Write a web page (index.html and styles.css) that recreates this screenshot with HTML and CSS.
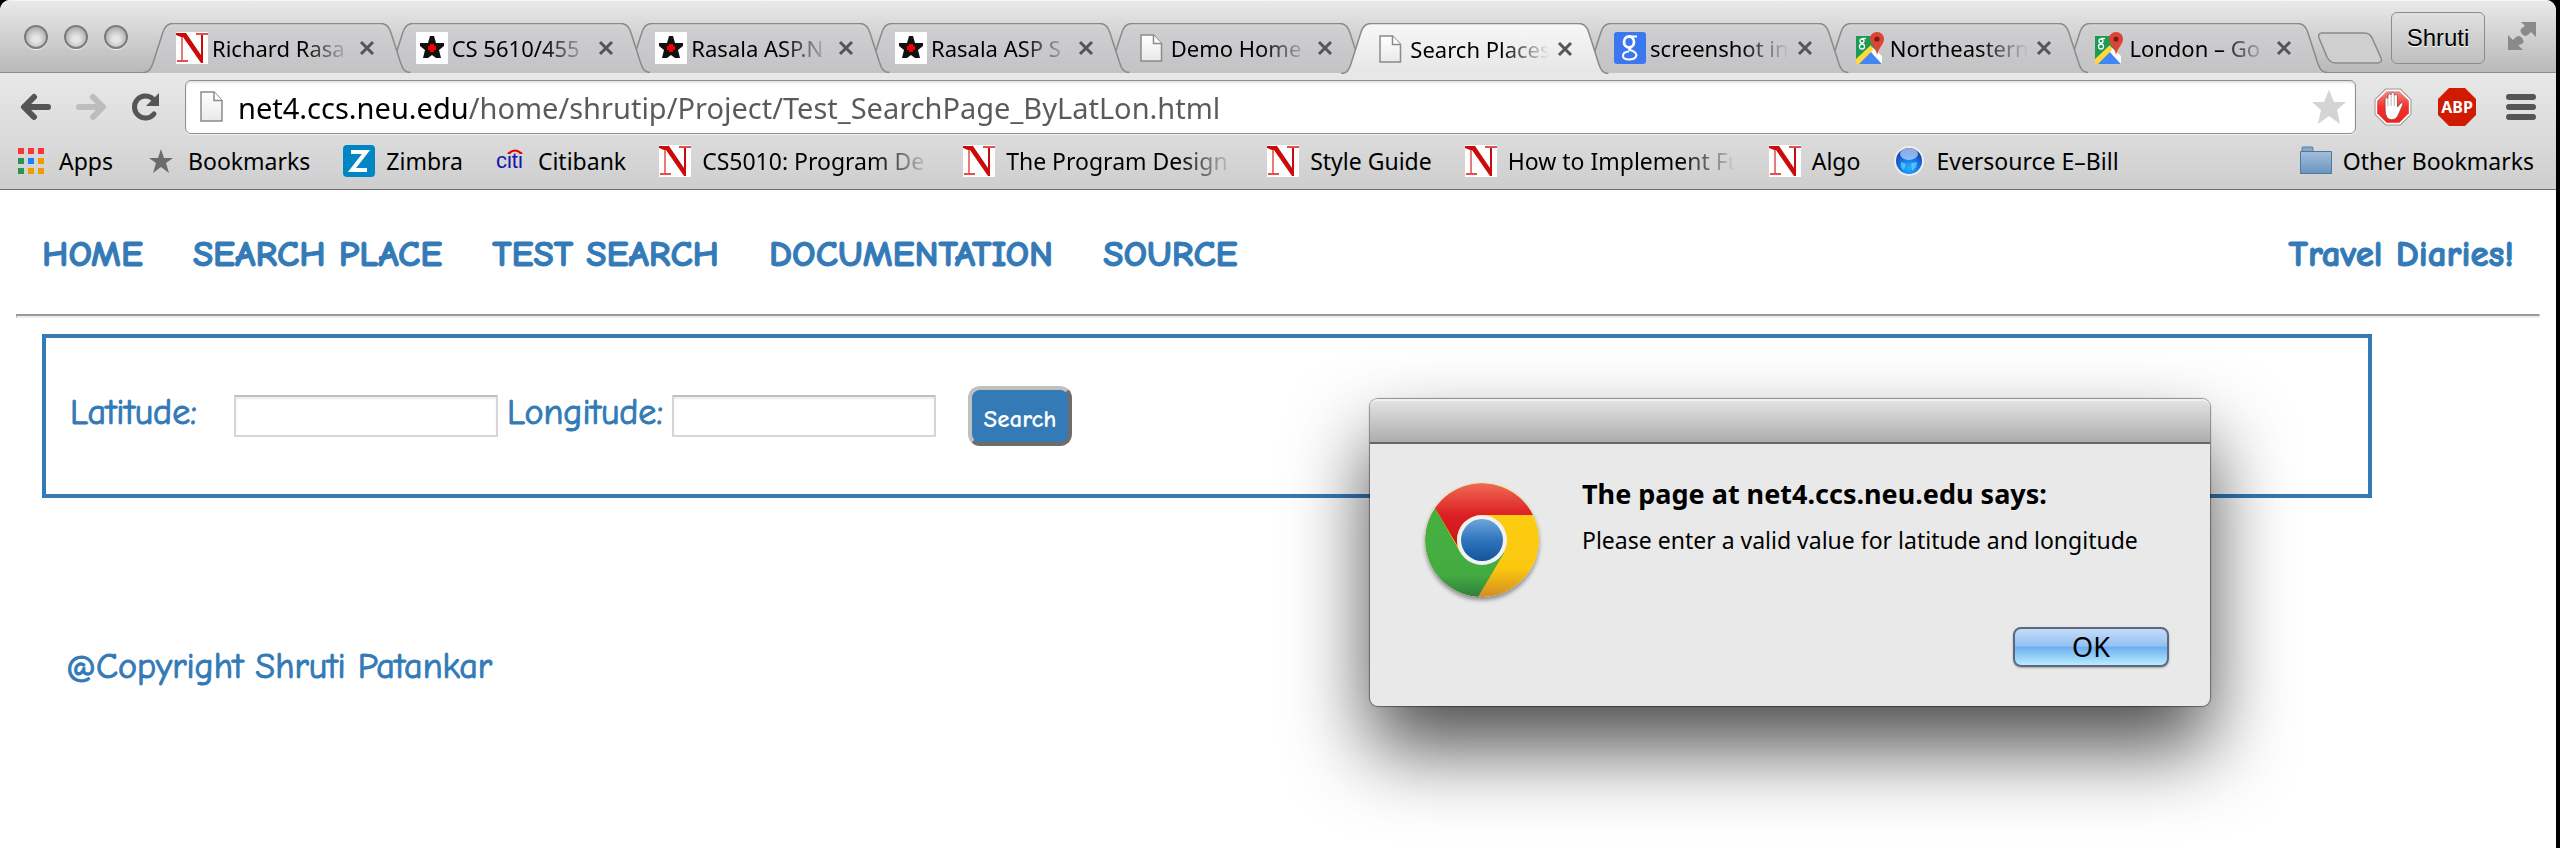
FILE: index.html
```html
<!DOCTYPE html>
<html lang="en">
<head>
<meta charset="utf-8">
<title>Search Places</title>
<link rel="stylesheet" href="styles.css">
</head>
<body>
<svg class="defs" aria-hidden="true">
  <defs>
    <linearGradient id="gTab" x1="0" y1="0" x2="0" y2="1"><stop offset="0" stop-color="#d8d8da"/><stop offset=".1" stop-color="#cfcfd1"/><stop offset="1" stop-color="#c3c3c5"/></linearGradient>
    <linearGradient id="gActive" x1="0" y1="0" x2="0" y2="1"><stop offset="0" stop-color="#f7f7f7"/><stop offset="1" stop-color="#e6e6e6"/></linearGradient>
    <linearGradient id="gPage" x1="0" y1="0" x2="0" y2="1"><stop offset="0" stop-color="#fff"/><stop offset="1" stop-color="#e9e9e9"/></linearGradient>
    <linearGradient id="gFolder" x1="0" y1="0" x2="0" y2="1"><stop offset="0" stop-color="#a3bfdc"/><stop offset="1" stop-color="#6a94bf"/></linearGradient>
    <radialGradient id="gGlobe" cx=".5" cy=".75" r=".7"><stop offset="0" stop-color="#23b4ff"/><stop offset=".5" stop-color="#1673ea"/><stop offset="1" stop-color="#1a3494"/></radialGradient>
    <linearGradient id="gRed" x1="0" y1="0" x2="0" y2="1"><stop offset="0" stop-color="#f06a55"/><stop offset=".5" stop-color="#dc1f23"/><stop offset="1" stop-color="#c4181c"/></linearGradient>
    <linearGradient id="gGreen" x1="0" y1="0" x2="0" y2="1"><stop offset="0" stop-color="#46b042"/><stop offset=".75" stop-color="#43ac41"/><stop offset="1" stop-color="#2f7f3c"/></linearGradient>
    <linearGradient id="gYellow" x1="0" y1="0" x2="0" y2="1"><stop offset="0" stop-color="#fdcf12"/><stop offset=".75" stop-color="#fbc80f"/><stop offset="1" stop-color="#d38c22"/></linearGradient>
    <linearGradient id="gBlue" x1="0" y1="0" x2="0" y2="1"><stop offset="0" stop-color="#6ea6da"/><stop offset=".5" stop-color="#2f74bd"/><stop offset="1" stop-color="#13559c"/></linearGradient>
    <linearGradient id="gHand" x1="0" y1="0" x2="0" y2="1"><stop offset="0" stop-color="#f58b84"/><stop offset=".5" stop-color="#f3302a"/><stop offset="1" stop-color="#ee231c"/></linearGradient>
  </defs>
  <symbol id="tab" viewBox="0 0 268 50" preserveAspectRatio="none">
    <path d="M0 50C6 50 8 46 10 40L20 9C22 3 25 .5 30 .5H238C243 .5 246 3 248 9L258 40C260 46 262 49.500 268 49.500V50Z" stroke="none"/>
    <path d="M0 49.500C6 49.500 8 46 10 40L20 9C22 3 25 .5 30 .5H238C243 .5 246 3 248 9L258 40C260 46 262 49.500 268 49.500" fill="none" stroke="#8a8a8a" stroke-width="1.500"/>
  </symbol>
  <symbol id="neu" viewBox="0 0 32 32"><path fill="#fff" d="M0 0h32v32H0z"/><path fill="#e87a7a" d="M5 3h2v26H5zM25 3h2v27h-2z"/><path fill="#e05050" d="M20 1h12v2H20zM1 28h11v2H1z"/><path fill="#cc0a0a" d="M0 1h10l15 22V3h2v28h-2L7 5v0H5L0 3z"/></symbol>
  <symbol id="star5" viewBox="0 0 32 32"><path fill="#fff" d="M0 0h32v32H0z"/><path fill="#111" d="M14 4h4l2 7h8v3l-5 4 2 8h-5l-4-3-4 3H7l2-8-5-4v-3h8z"/><path fill="#f00000" d="M14 12h4v2h2v4h-2v2h-4v-2h-2v-4h2z"/></symbol>
  <symbol id="page" viewBox="0 0 32 32"><path fill="url(#gPage)" stroke="#8b8b8b" stroke-width="1.500" d="M6 3h12.500l8 8.500V29H6z"/><path fill="#fff" stroke="#8b8b8b" stroke-width="1.500" d="M18.500 3v8.500h8"/></symbol>
  <symbol id="google" viewBox="0 0 32 32"><rect width="32" height="32" rx="3" fill="#3b78f0"/><g fill="none" stroke="#fff"><ellipse cx="15" cy="10" rx="5" ry="5.500" stroke-width="2.800"/><path stroke-width="2" d="M23 4.500h-8M18 15c-3 1-4 2-2 3.500M16 18c6 2 7 4 6 6.500-2 4-12 4-13 0-.5-3 2-5 6-5"/></g></symbol>
  <symbol id="maps" viewBox="0 0 32 32"><path fill="#1c9b55" d="M2 4h20v16L5 32H2z"/><path fill="#4285f4" d="M4 32l12-13 12 13z"/><path fill="#fff" d="M18 15l10 9v8L15 18z"/><path fill="#ffd93b" d="M2 27L17 13l2 5L5 32H2z"/><path fill="#dc4437" d="M23 0c4 0 7 3 7 7 0 5-5 8-7 16-1-8-7-11-7-16 0-4 3-7 7-7z"/><circle cx="23" cy="7" r="2.600" fill="#7b1c14"/><g fill="none" stroke="#fff" stroke-width="1.300"><circle cx="8" cy="9" r="2"/><circle cx="8" cy="14.500" r="2.500"/><path d="M8 6.500h4"/></g></symbol>
  <symbol id="x" viewBox="0 0 16 16"><path fill="none" stroke="#555" stroke-width="3" d="M2 2l12 12M14 2L2 14"/></symbol>
</svg>

<div class="window">
  <header class="chrome">
    <div class="tabstrip">
      <div class="lights">
        <button class="light" aria-label="Close window"></button>
        <button class="light" aria-label="Minimize window"></button>
        <button class="light" aria-label="Zoom window"></button>
      </div>
      <ul class="tabs">
        <li class="tab"><svg class="shape"><use href="#tab"/></svg><svg class="fav"><use href="#neu"/></svg><span class="title">Richard Rasa</span><button class="close" aria-label="Close tab"><svg><use href="#x"/></svg></button></li>
        <li class="tab"><svg class="shape"><use href="#tab"/></svg><svg class="fav"><use href="#star5"/></svg><span class="title">CS 5610/455</span><button class="close" aria-label="Close tab"><svg><use href="#x"/></svg></button></li>
        <li class="tab"><svg class="shape"><use href="#tab"/></svg><svg class="fav"><use href="#star5"/></svg><span class="title">Rasala ASP.N</span><button class="close" aria-label="Close tab"><svg><use href="#x"/></svg></button></li>
        <li class="tab"><svg class="shape"><use href="#tab"/></svg><svg class="fav"><use href="#star5"/></svg><span class="title">Rasala ASP S</span><button class="close" aria-label="Close tab"><svg><use href="#x"/></svg></button></li>
        <li class="tab"><svg class="shape"><use href="#tab"/></svg><svg class="fav"><use href="#page"/></svg><span class="title">Demo Home</span><button class="close" aria-label="Close tab"><svg><use href="#x"/></svg></button></li>
        <li class="tab active"><svg class="shape"><use href="#tab"/></svg><svg class="fav"><use href="#page"/></svg><span class="title">Search Places</span><button class="close" aria-label="Close tab"><svg><use href="#x"/></svg></button></li>
        <li class="tab"><svg class="shape"><use href="#tab"/></svg><svg class="fav"><use href="#google"/></svg><span class="title">screenshot in</span><button class="close" aria-label="Close tab"><svg><use href="#x"/></svg></button></li>
        <li class="tab"><svg class="shape"><use href="#tab"/></svg><svg class="fav"><use href="#maps"/></svg><span class="title">Northeastern</span><button class="close" aria-label="Close tab"><svg><use href="#x"/></svg></button></li>
        <li class="tab"><svg class="shape"><use href="#tab"/></svg><svg class="fav"><use href="#maps"/></svg><span class="title">London – Go</span><button class="close" aria-label="Close tab"><svg><use href="#x"/></svg></button></li>
      </ul>
      <button class="newtab" aria-label="New tab"><svg viewBox="0 0 64 32" preserveAspectRatio="none"><path fill="#cfcfcf" stroke="#8a8a8a" stroke-width="1.500" d="M4 1h42c5 0 7 2 9 7l8 18c1 3 0 5-4 5H18c-5 0-7-2-9-6L1 6C0 3 1 1 4 1z"/></svg></button>
      <button class="profile">Shruti</button>
      <button class="full" aria-label="Full screen"><svg viewBox="0 0 30 30"><path fill="#8a8a8a" d="M14 1h15v15l-5-5-2 2q-4 4-7 0t0-6l3-2zM1 14l5 5 2-2q4-4 7 0t0 6l-4 1 5 5H1z"/></svg></button>
    </div>
    <div class="toolbar">
      <button class="nav" aria-label="Back"><svg viewBox="0 0 32 28"><path fill="none" stroke="#555" stroke-width="6" stroke-linecap="round" stroke-linejoin="round" d="M14 4L4 14l10 10M5 14h23"/></svg></button>
      <button class="nav" aria-label="Forward"><svg viewBox="0 0 32 28"><path fill="none" stroke="#bdbdbd" stroke-width="6" stroke-linecap="round" stroke-linejoin="round" d="M18 4l10 10-10 10M27 14H4"/></svg></button>
      <button class="nav" aria-label="Reload"><svg viewBox="0 0 32 28"><path fill="none" stroke="#555" stroke-width="5" stroke-linecap="round" d="M24 21a11 11 0 1 1-1-15"/><path fill="#555" d="M29 0v13H16z"/></svg></button>
      <div class="omnibox">
        <svg class="pageicon" viewBox="0 0 24 32"><path fill="url(#gPage)" stroke="#8b8b8b" stroke-width="1.500" d="M1 1h13l8 8.500V30H1z"/><path fill="#fff" stroke="#8b8b8b" stroke-width="1.500" d="M14 1v8.500h8"/></svg>
        <input class="url" type="text" aria-label="Address" value="net4.ccs.neu.edu/home/shrutip/Project/Test_SearchPage_ByLatLon.html">
        <button class="fave" aria-label="Bookmark this page"><svg viewBox="0 0 34 34"><path fill="#d4d4d4" d="M17 0l5 12h12l-9 8 3 14-11-8-11 8 3-14-9-8h12z"/></svg></button>
      </div>
      <button class="ext" aria-label="AdBlock"><svg viewBox="0 0 36 36"><path fill="#fff" stroke="#999" d="M11 1h14l10 10v14L25 35H11L1 25V11z"/><path fill="url(#gHand)" d="M12 3h12l9 9v12l-9 9H12l-9-9V12z"/><path fill="#fff" stroke="#8d4a46" stroke-width=".8" d="M10.500 20V10q1.300-2 2.700 0V6.500q1.500-2 3 0V5q1.500-2 3 0v2q1.500-2 3 0v11l3.500-4q2.500-.5 1.500 2l-4 9q-2 5-6.500 5-6.200 0-6.200-10z"/><path stroke="#b9a5a4" stroke-width=".8" d="M13.200 10v7M16.200 6v11M19.200 6v11"/></svg></button>
      <button class="ext abp" aria-label="Adblock Plus"><svg viewBox="0 0 38 38"><path fill="#d11b00" d="M11 0h16l11 11v16L27 38H11L0 27V11z"/></svg><span>ABP</span></button>
      <button class="menu" aria-label="Menu"><svg viewBox="0 0 30 28"><path stroke="#555" stroke-width="6" stroke-linecap="round" d="M3 4h24M3 14h24M3 24h24"/></svg></button>
    </div>
    <nav class="bookmarks" aria-label="Bookmarks">
      <a href="#" class="apps"><svg viewBox="0 0 26 26"><path fill="#f33" d="M0 0h6v6H0zM10 0h6v6h-6zM20 0h6v6h-6z"/><path fill="#2a9552" d="M0 10h6v6H0zM0 20h6v6H0z"/><path fill="#1a82f7" d="M10 10h6v6h-6z"/><path fill="#f29900" d="M20 10h6v6h-6zM10 20h6v6h-6zM20 20h6v6h-6z"/></svg>Apps</a>
      <a href="#" class="marks"><svg viewBox="0 0 24 24"><path fill="#6b6b6b" d="M12 0l3 9h9l-7 5 3 10-8-6-8 6 3-10-7-5h9z"/></svg>Bookmarks</a>
      <a href="#"><svg viewBox="0 0 32 32"><rect width="32" height="32" rx="4" fill="#0087c3"/><path fill="none" stroke="#fff" stroke-width="4" d="M8 7h15L9 25h15"/></svg>Zimbra</a>
      <a href="#" class="citi"><span class="citilogo"><svg viewBox="0 0 16 5"><path fill="none" stroke="#f00000" stroke-width="2" d="M1 5q7-7 14 0"/></svg>citi</span>Citibank</a>
      <a href="#"><svg><use href="#neu"/></svg><span class="fade">CS5010: Program De</span></a>
      <a href="#"><svg><use href="#neu"/></svg><span class="fade">The Program Design</span></a>
      <a href="#"><svg><use href="#neu"/></svg>Style Guide</a>
      <a href="#"><svg><use href="#neu"/></svg><span class="fade">How to Implement Fu</span></a>
      <a href="#"><svg><use href="#neu"/></svg>Algo</a>
      <a href="#"><svg viewBox="0 0 32 32"><circle cx="16" cy="16" r="14" fill="url(#gGlobe)" stroke="#eee" stroke-width="2"/><ellipse cx="16" cy="9" rx="9" ry="6" fill="#bcdcff" opacity=".7"/><path fill="#7fe0ff" opacity=".6" d="M8 17l5 2-2 6-3-3zM18 18l6-1-1 5-4 4z"/></svg>Eversource E–Bill</a>
      <a href="#" class="other"><svg viewBox="0 0 32 32"><path fill="#86a8cc" stroke="#567ca5" d="M2 7V3q0-1 1-1h9q1 0 1 1v4z"/><path fill="url(#gFolder)" stroke="#4f769f" d="M.5 6.500h31v22H.5z"/></svg>Other Bookmarks</a>
    </nav>
  </header>

  <main class="page">
    <nav class="sitenav">
      <a href="#">HOME</a>
      <a href="#">SEARCH PLACE</a>
      <a href="#">TEST SEARCH</a>
      <a href="#">DOCUMENTATION</a>
      <a href="#">SOURCE</a>
      <a href="#" class="brand">Travel Diaries!</a>
    </nav>
    <hr>
    <form class="search">
      <label for="lat" class="lat">Latitude:</label>
      <input id="lat" class="coord" type="text">
      <label for="lon" class="lon">Longitude:</label>
      <input id="lon" class="coord" type="text">
      <button type="button" class="go">Search</button>
    </form>
    <footer class="foot">@Copyright Shruti Patankar</footer>
  </main>

  <div class="dialog" role="alertdialog" aria-labelledby="dt" aria-describedby="dm">
    <div class="bar"></div>
    <div class="body">
      <svg class="logo" viewBox="0 0 114 114">
        <circle cx="57" cy="57" r="57" fill="url(#gYellow)"/>
        <path fill="url(#gGreen)" d="M10 25A57 57 0 0 0 53 114L79 70 57 57 35 69z"/>
        <path fill="url(#gRed)" d="M10 25A57 57 0 0 1 108 32H57A25 25 0 0 0 33 64z"/>
        <circle cx="57" cy="57" r="25" fill="#f1f1f1"/>
        <circle cx="57" cy="57" r="21" fill="url(#gBlue)"/>
      </svg>
      <div class="words">
        <h1 id="dt">The page at net4.ccs.neu.edu says:</h1>
        <p id="dm">Please enter a valid value for latitude and longitude</p>
      </div>
      <button class="ok">OK</button>
    </div>
  </div>
</div>
</body>
</html>
```
FILE: styles.css
```css
* { box-sizing: border-box; }
html { background: #000; }
body {
  margin: 0;
  background: #000;
  color: #000;
  font-family: "Lucida Grande", "Noto Sans", sans-serif;
  font-size: 23px;
}
button { margin: 0; padding: 0; border: 0; background: none; font: inherit; color: inherit; flex: none; }
svg { display: block; flex: none; }
.defs { position: absolute; width: 0; height: 0; }

.window {
  position: relative;
  margin-right: 4px;
  min-height: 100vh;
  background: #fff;
  border-radius: 10px 10px 0 0;
  overflow: hidden;
}

/* Browser chrome */
.tabstrip {
  display: flex;
  height: 73px;
  background: linear-gradient(#e9e9e9, #b9b9b9);
  border-top: 1px solid #f5f5f5;
  border-bottom: 1px solid #8a8a8a;
}
.lights { display: flex; gap: 16px; padding: 24px 17px 0 24px; }
.light {
  width: 24px;
  height: 24px;
  border-radius: 50%;
  border: 2px solid #7c7c7c;
  background: radial-gradient(circle at 50% 60%, #e6e6e6 20%, #bdbdbd 60%, #999);
  box-shadow: 0 1px 1px #f2f2f2;
}
.tabs {
  position: relative;
  display: flex;
  flex: 1;
  min-width: 0;
  margin: 0 18px 0 -2px;
  padding: 22px 0 0;
  list-style: none;
  font-size: 22px;
}
.tab {
  position: relative;
  flex: 1 1 0;
  min-width: 0;
  display: flex;
  align-items: center;
  height: 50px;
  padding: 0 8px 0 33px;
}
.tab:nth-child(1) { z-index: 9; }
.tab:nth-child(2) { z-index: 8; }
.tab:nth-child(3) { z-index: 7; }
.tab:nth-child(4) { z-index: 6; }
.tab:nth-child(5) { z-index: 5; }
.tab:nth-child(6) { z-index: 4; }
.tab:nth-child(7) { z-index: 3; }
.tab:nth-child(8) { z-index: 2; }
.tab:nth-child(9) { z-index: 1; }
.tab.active { z-index: 10; height: 51px; }
.shape { position: absolute; left: 0; top: 0; width: calc(100% + 28px); height: 100%; fill: url(#gTab); }
.active .shape { fill: url(#gActive); }
.fav { position: relative; width: 32px; height: 32px; }
.title {
  position: relative;
  flex: 1;
  min-width: 0;
  margin: 0 8px 0 4px;
  overflow: hidden;
  white-space: nowrap;
  line-height: 32px;
  -webkit-mask-image: linear-gradient(to left, transparent, #000 48px);
  mask-image: linear-gradient(to left, transparent, #000 48px);
}
.close { position: relative; }
.close svg { width: 16px; height: 16px; }
.newtab { margin-top: 31px; align-self: flex-start; }
.newtab svg { width: 64px; height: 32px; }
.profile {
  height: 52px;
  width: 94px;
  margin: 11px 22px 0 9px;
  border: 1px solid #8c8c8c;
  border-radius: 6px;
  font-family: "Helvetica Neue", "Liberation Sans", sans-serif;
  font-size: 24px;
  text-shadow: 0 1px 0 #fff;
}
.full { width: 30px; height: 30px; margin: 20px 19px 0 0; }
.full svg { width: 30px; height: 30px; }

.toolbar {
  display: flex;
  align-items: center;
  height: 68px;
  padding: 0 20px;
  background: linear-gradient(#e8e8e8, #dadada);
}
.nav { width: 32px; margin-right: 23px; }
.nav svg { width: 32px; height: 28px; }
.omnibox {
  flex: 1;
  display: flex;
  align-items: center;
  height: 54px;
  padding: 0 9px 0 14px;
  background: #fff;
  border: 1px solid #8e8e8e;
  border-radius: 6px;
  box-shadow: 0 1px 0 #f2f2f2, inset 0 2px 2px #e4e4e4;
}
.pageicon { width: 24px; height: 32px; }
.url {
  flex: 1;
  min-width: 0;
  margin-left: 14px;
  padding: 0;
  border: 0;
  outline: 0;
  font: inherit;
  font-size: 29px;
  color: #5a5a5a;
  background: linear-gradient(to right, #000 231px, #5a5a5a 231px) text;
  -webkit-background-clip: text;
  -webkit-text-fill-color: transparent;
}
.fave svg { width: 34px; height: 34px; }
.ext { position: relative; width: 38px; margin-left: 18px; }
.ext svg { width: 38px; height: 38px; }
.abp { margin-left: 26px; }
.abp span {
  position: absolute;
  inset: 0;
  font: bold 16px/38px "Noto Sans", sans-serif;
  color: #fff;
  text-align: center;
}
.menu { margin-left: 30px; }
.menu svg { width: 30px; height: 28px; }

.bookmarks {
  display: flex;
  align-items: center;
  height: 49px;
  padding: 0 22px 8px 18px;
  background: linear-gradient(#dadada, #cecece);
  border-bottom: 1px solid #6e6e6e;
}
.bookmarks a {
  display: flex;
  align-items: center;
  gap: 11px;
  margin-right: 33px;
  color: #000;
  text-decoration: none;
  white-space: nowrap;
  line-height: 32px;
}
.bookmarks a > svg { width: 32px; height: 32px; }
.bookmarks .apps, .bookmarks .marks, .bookmarks .citi { gap: 15px; }
.bookmarks .apps { margin-right: 36px; }
.bookmarks .apps > svg { width: 26px; height: 26px; }
.bookmarks .marks > svg { width: 24px; height: 24px; }
.bookmarks .other { margin: 0 0 0 auto; }
.citilogo { position: relative; color: #1414b0; font: 22px/32px "Liberation Sans", sans-serif; }
.citilogo svg { position: absolute; left: 11px; top: 4px; width: 16px; height: 5px; }
.fade {
  width: 228px;
  overflow: hidden;
  -webkit-mask-image: linear-gradient(to left, transparent, #000 56px);
  mask-image: linear-gradient(to left, transparent, #000 56px);
}

/* Page content */
.page {
  padding: 0 16px;
  color: #337ab7;
  font-family: "Comic Sans MS", "Comic Neue", "Noto Sans", sans-serif;
  font-size: 36px;
  -webkit-text-stroke: 1px;
}
.sitenav { display: flex; gap: 50px; padding: 46px 26px 42px; font-size: 37px; font-weight: bold; line-height: 36px; }
.sitenav a { color: inherit; text-decoration: none; white-space: nowrap; }
.brand { margin-left: auto; }
hr { margin: 0; border: 2px solid; border-color: #9a9a9a #eee #eee #9a9a9a; border-width: 2px 1px; }
.search {
  display: flex;
  align-items: center;
  height: 164px;
  margin: 16px 168px 0 26px;
  padding: 0 24px;
  border: 4px solid #337ab7;
}
.search label { padding-bottom: 8px; }
.lat { width: 164px; }
.lon { width: 165px; margin-left: 9px; }
.coord {
  width: 264px;
  height: 42px;
  border: 2px solid #d6d6d6;
  border-top-color: #bfbfbf;
  border-radius: 0;
  background: #fff;
  box-shadow: inset 0 2px 2px #eee;
}
.go {
  width: 104px;
  height: 60px;
  margin-left: 32px;
  padding-top: 4px;
  border: 4px solid;
  border-color: #c0c0c0 #6d6d6d #6d6d6d #c0c0c0;
  border-radius: 12px;
  background: #337ab7;
  color: #fff;
  font-size: 25px;
  font-weight: bold;
  -webkit-text-stroke: 0;
}
.foot { padding: 147px 50px 0; line-height: 44px; }

/* Alert window */
.dialog {
  position: absolute;
  left: 1370px;
  top: 399px;
  width: 840px;
  background: #e9e9e9;
  border-radius: 8px;
  box-shadow: 0 0 1px 1px rgba(0, 0, 0, .4), 0 42px 80px rgba(0, 0, 0, .7);
}
.bar {
  height: 45px;
  border-radius: 8px 8px 0 0;
  border-top: 2px solid #efefef;
  border-bottom: 2px solid #666;
  background: linear-gradient(#e2e2e2, #adadad);
}
.body { display: grid; grid-template-columns: 114px 1fr; column-gap: 43px; padding: 39px 41px 39px 55px; }
.logo { width: 114px; height: 114px; border-radius: 50%; box-shadow: 0 3px 4px rgba(0, 0, 0, .4); }
h1 { margin: 0; font-size: 27px; line-height: 22px; }
p { margin: 22px 0 0; font-size: 23px; line-height: 26px; }
.ok {
  grid-column: 2;
  justify-self: end;
  width: 156px;
  height: 40px;
  margin-top: 30px;
  border: 2px solid #5f6682;
  border-radius: 8px;
  background: linear-gradient(#c5dcf8, #93c0f3 48%, #6aaef2 50%, #b9ecfd);
  box-shadow: 0 1px 2px rgba(0, 0, 0, .3);
  font-size: 27px;
  line-height: 34px;
}
```
